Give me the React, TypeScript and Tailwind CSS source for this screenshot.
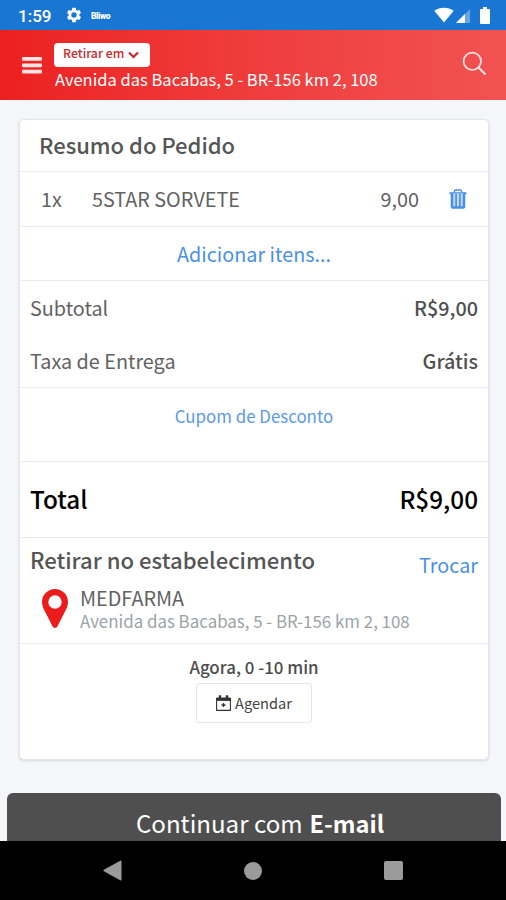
import { ReactNode } from 'react';

interface RowProps {
  label: string;
  value: string;
  className: string;
}

function Row({ label, value, className }: RowProps) {
  return (
    <div className={`flex items-center justify-between px-[10px] ${className}`}>
      <span>{label}</span>
      <span className="font-medium text-[#4f4f4f]">{value}</span>
    </div>
  );
}

function Section({ children, className }: { children: ReactNode; className: string }) {
  return <div className={`border-b border-[#ebebed] ${className}`}>{children}</div>;
}

function StatusBar() {
  return (
    <div className="flex h-[30px] shrink-0 items-center bg-[#1976d2] pl-[18px] pr-[16px] text-white">
      <span className="w-[34px] pt-[2px] font-['Roboto',sans-serif] text-[17px] font-medium leading-[20px]">1:59</span>
      <svg className="ml-[13px] h-[18px] w-[18px]" viewBox="0 0 24 24" fill="currentColor">
        <path d="M19.14 12.94c.04-.3.06-.61.06-.94s-.02-.64-.07-.94l2.03-1.58a.5.5 0 0 0 .12-.61l-1.92-3.32a.5.5 0 0 0-.59-.22l-2.39.96a7 7 0 0 0-1.62-.94l-.36-2.54a.5.5 0 0 0-.48-.41h-3.84a.5.5 0 0 0-.47.41l-.36 2.54c-.59.24-1.13.57-1.62.94l-2.39-.96a.5.5 0 0 0-.59.22L2.74 8.87a.5.5 0 0 0 .12.61l2.03 1.58a6 6 0 0 0 0 1.88l-2.03 1.58a.5.5 0 0 0-.12.61l1.92 3.32c.12.22.37.29.59.22l2.39-.96c.5.38 1.03.7 1.62.94l.36 2.54c.05.24.24.41.48.41h3.84c.24 0 .44-.17.47-.41l.36-2.54a7 7 0 0 0 1.62-.94l2.39.96c.22.08.47 0 .59-.22l1.92-3.32a.5.5 0 0 0-.12-.61zM12 15.6a3.6 3.6 0 1 1 0-7.2 3.6 3.6 0 0 1 0 7.2z" />
      </svg>
      <span className="ml-[8px] pt-[1px] font-['Roboto',sans-serif] text-[8.5px] font-black leading-[10px] tracking-[-0.4px]">Bliwo</span>
      <div className="ml-auto flex items-center">
        <svg className="h-[16px] w-[20px]" viewBox="0 0 20 16" fill="currentColor">
          <path d="M10 15.5.3 3.8C3 1.7 6.3.8 10 .8s7 .9 9.7 3z" />
        </svg>
        <svg className="ml-[2px] h-[15px] w-[15px]" viewBox="0 0 16 16" fill="currentColor">
          <path d="M15 1v15H0z" opacity=".35" />
          <path d="M9.500 6.500V16H0z" />
        </svg>
        <svg className="ml-[9px] h-[17px] w-[10px]" viewBox="0 0 10 17" fill="currentColor">
          <path d="M3 0h4v2h2q1 0 1 1v13q0 1-1 1H1q-1 0-1-1V3q0-1 1-1h2z" />
        </svg>
      </div>
    </div>
  );
}

function Header() {
  return (
    <header className="flex h-[70px] shrink-0 items-start bg-linear-to-r from-[#ec1f20] to-[#f15252] text-white">
      <svg className="ml-[22px] mt-[27px] h-[17px] w-[20px]" viewBox="0 0 20 17" fill="#ffe6e4">
        <rect width="20" height="3.8" rx="1" />
        <rect y="6.4" width="20" height="3.8" rx="1" />
        <rect y="12.8" width="20" height="3.8" rx="1" />
      </svg>
      <div className="ml-[12px] mt-[13px] flex flex-col items-start">
        <div className="flex h-[24px] w-[96px] items-center rounded-[4px] bg-white pl-[9px] text-[#c9282d]">
          <span className="pb-[4px] text-[12.3px] font-medium leading-[20px]">Retirar em</span>
          <svg className="ml-[4px] h-[8px] w-[11px]" viewBox="0 0 11 8" fill="none" stroke="currentColor" strokeWidth="2.2">
            <path d="m1 1.500 4.500 4.500L10 1.500" />
          </svg>
        </div>
        <span className="whitespace-nowrap pl-px text-[16.55px] leading-[24px]">Avenida das Bacabas, 5 - BR-156 km 2, 108</span>
      </div>
      <svg className="ml-auto mr-[19px] mt-[21px] h-[25px] w-[25px]" viewBox="0 0 25 25" fill="none" stroke="#ffe6e4" strokeWidth="1.7">
        <circle cx="10.3" cy="10.3" r="8.7" />
        <path d="m16.300 16.300 7.200 7.200" strokeWidth="2.1" />
      </svg>
    </header>
  );
}

function TrashIcon() {
  return (
    <svg className="h-[20px] w-[18px]" viewBox="0 0 18 20" fill="none" stroke="#4a90e8">
      <path d="M5.500 3.500V2.300q0-1.300 1.300-1.300h4.400q1.300 0 1.300 1.300v1.200" strokeWidth="1.4" />
      <path d="M.5 4.200h17" strokeWidth="2" />
      <path d="M3 4.500v12.700q0 1.300 1.300 1.300h9.400q1.300 0 1.300-1.300V4.500" fill="#c4dcf9" strokeWidth="2.6" />
      <path d="M7.100 5v13M10.900 5v13" strokeWidth="1.7" />
    </svg>
  );
}

function PinIcon() {
  return (
    <svg className="h-[39px] w-[26px]" viewBox="0 0 26 39" fill="#ec1c1c">
      <path fillRule="evenodd" d="M13 0a13 13 0 0 1 13 13c0 4-2 7.500-3.500 10.500l-7 13.800c-1 2.200-4 2.200-5 0l-7-13.800C2 20.500 0 17 0 13A13 13 0 0 1 13 0zm0 6.300a6.700 6.700 0 1 0 0 13.400 6.700 6.700 0 0 0 0-13.400z" />
    </svg>
  );
}

function CalendarIcon() {
  return (
    <svg className="h-[16px] w-[15px]" viewBox="0 0 15 16" fill="none" stroke="#333">
      <path d="M.6 3.500h13.800v11.900H.6z" strokeWidth="1.1" />
      <path d="M.5 4.200h14" strokeWidth="3.4" />
      <path d="M4 .3v3M11 .3v3" strokeWidth="2.4" />
      <path d="M7.500 8v4M5.500 10h4" strokeWidth="1.3" />
    </svg>
  );
}

export default function App() {
  return (
    <div className="flex h-[900px] w-[506px] flex-col overflow-hidden bg-[#f4f6fa] font-['Noto_Sans_CJK_JP',sans-serif] text-[#626262]">
      <StatusBar />
      <Header />

      {/* Pedido */}
      <main className="ml-[19px] mr-[17px] mt-[19px] h-[641px] shrink-0 rounded-[5px] border border-[#e4e5e9] bg-white shadow-sm">
        <Section className="flex h-[52px] items-center pb-[4px] pl-[19px]">
          <h1 className="text-[22px] font-medium leading-[30px] text-[#555]">Resumo do Pedido</h1>
        </Section>
        <Section className="flex h-[55px] items-center px-[21px] text-[19.8px]">
          <span className="w-[51px]">1x</span>
          <span>5STAR SORVETE</span>
          <span className="ml-auto mr-[30px]">9,00</span>
          <TrashIcon />
        </Section>
        <Section className="flex h-[54px] items-center justify-center text-[19.8px] text-[#4a90e2]">
          <a>Adicionar itens...</a>
        </Section>
        <Section className="h-[107px] text-[19.8px]">
          <Row label="Subtotal" value="R$9,00" className="h-[53px]" />
          <Row label="Taxa de Entrega" value="Grátis" className="h-[53px]" />
        </Section>
        <Section className="flex h-[74px] items-start justify-center pt-[16px] text-[16.9px] leading-[24px] text-[#5a98e6]">
          <a>Cupom de Desconto</a>
        </Section>
        <Section className="flex h-[76px] items-center justify-between px-[10px] text-[24.3px] font-medium text-black">
          <span>Total</span>
          <span>R$9,00</span>
        </Section>
        <Section className="h-[106px] px-[10px] pt-[7px]">
          <div className="flex h-[37px] items-start justify-between">
            <h2 className="text-[22.1px] font-medium leading-[28px] text-[#555]">Retirar no estabelecimento</h2>
            <a className="mt-[6px] text-[19.8px] leading-[28px] text-[#4a90e2]">Trocar</a>
          </div>
          <div className="flex items-start pl-[12px]">
            <div className="mt-[7px]">
              <PinIcon />
            </div>
            <div className="ml-[12px] flex flex-col whitespace-nowrap pt-[3px]">
              <span className="text-[19.8px] leading-[26px]">MEDFARMA</span>
              <span className="text-[16.9px] leading-[20px] text-[#9ba3a7]">Avenida das Bacabas, 5 - BR-156 km 2, 108</span>
            </div>
          </div>
        </Section>
        <div className="flex flex-col items-center pt-[11px]">
          <span className="text-[16.9px] font-medium leading-[24px] text-[#4c4c4c]">Agora, 0 -10 min</span>
          <button className="mt-[4px] flex h-[40px] w-[116px] items-center justify-center gap-[4px] rounded-[3px] border border-[#e6e6e8] pb-[1px] text-[14.6px] text-[#444]">
            <CalendarIcon />
            <span>Agendar</span>
          </button>
        </div>
      </main>

      <div className="ml-[7px] mr-[5px] mt-[33px] flex h-[48px] shrink-0 items-center justify-center gap-[7px] rounded-t-[6px] bg-[#4f4f4f] pl-[12px] pt-[12px] leading-[30px] text-white">
        <span className="text-[24.1px]">Continuar com</span>
        <span className="text-[23.6px] font-bold">E-mail</span>
      </div>

      {/* Barra de navegação */}
      <nav className="flex h-[59px] shrink-0 items-center bg-black pl-[103px] text-[#9b9b9b]">
        <svg className="h-[21px] w-[19px]" viewBox="0 0 19 21" fill="currentColor">
          <path d="M18.500 1v19q0 .8-.8.400L.8 11.200q-.8-.7 0-1.400L17.700.6q.8-.4.800.4z" />
        </svg>
        <div className="ml-[122px] h-[18px] w-[18px] rounded-full bg-[#9b9b9b]" />
        <div className="ml-[122px] h-[19px] w-[19px] rounded-[2px] bg-[#9b9b9b]" />
      </nav>
    </div>
  );
}
